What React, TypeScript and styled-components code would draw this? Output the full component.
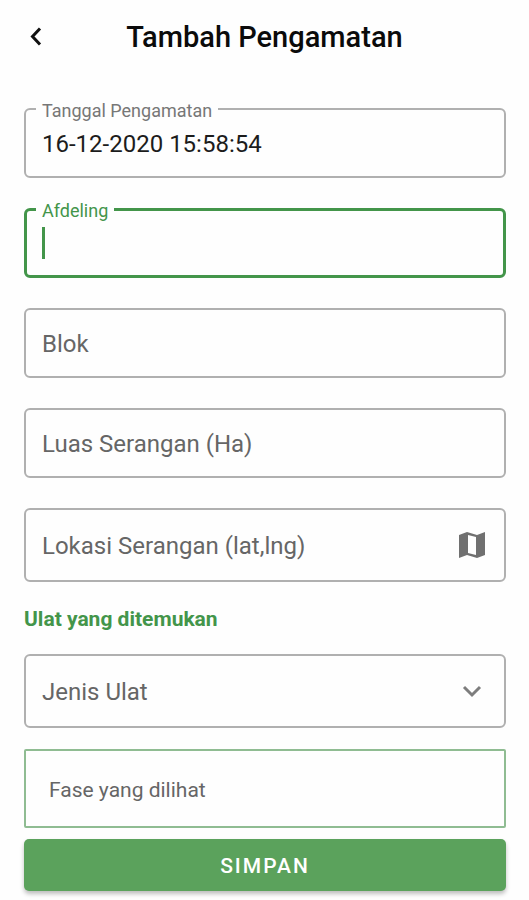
import React from "react";
import styled, { createGlobalStyle, css } from "styled-components";

const green = "#43954a";

const GlobalStyle = createGlobalStyle`
  *, *::before, *::after { box-sizing: border-box; }
  body {
    margin: 0;
    background: #fefefe;
    font-family: Roboto, "Liberation Sans", sans-serif;
  }
`;

const Page = styled.div`
  display: flex;
  flex-direction: column;
`;

const AppBar = styled.header`
  display: grid;
  grid-template-columns: 48px 1fr 48px;
  align-items: center;
  height: 74px;
  padding: 0 12px;
`;

const BackButton = styled.button`
  display: grid;
  place-items: center;
  width: 48px;
  height: 48px;
  padding: 0;
  border: 0;
  background: none;
  color: #111;
`;

const Title = styled.h1`
  margin: 0;
  color: #0b0b0b;
  font-size: 29px;
  font-weight: 500;
  line-height: 36px;
  text-align: center;
`;

const Form = styled.form`
  display: flex;
  flex-direction: column;
  padding: 34px 23px 8px 24px;
`;

const FieldList = styled.div`
  display: flex;
  flex-direction: column;
  gap: 30px;
`;

const Field = styled.div<{ $active?: boolean; $tall?: boolean }>`
  position: relative;
  display: flex;
  align-items: center;
  height: ${({ $tall }) => ($tall ? 74 : 70)}px;
  padding: 0 16px;
  border: 2px solid #b0b0b0;
  border-radius: 6px;
  ${({ $active }) =>
    $active &&
    css`
      border-width: 3px;
      border-color: ${green};
      padding: 0 15px;
    `}
`;

const FloatingLabel = styled.label<{ $active?: boolean }>`
  position: absolute;
  top: ${({ $active }) => ($active ? -13 : -12)}px;
  left: ${({ $active }) => ($active ? 9 : 10)}px;
  padding: 0 6px;
  background: #fefefe;
  color: ${({ $active }) => ($active ? green : "#777")};
  font-size: 18px;
  line-height: 26px;
`;

const controlText = css`
  flex: 1;
  min-width: 0;
  height: 100%;
  padding: 2px 0 0;
  border: 0;
  outline: 0;
  background: none;
  font-family: inherit;
  font-size: 24px;
`;

const TextInput = styled.input`
  ${controlText}
  color: #1c1c1c;
  &::placeholder {
    color: #666;
    opacity: 1;
  }
`;

const FocusedInput = styled(TextInput)`
  caret-color: transparent;
`;

const Caret = styled.span`
  width: 3px;
  height: 32px;
  background: ${green};
`;

const Select = styled.select`
  ${controlText}
  appearance: none;
  color: #666;
`;

const IconButton = styled.button`
  display: grid;
  place-items: center;
  width: 32px;
  height: 32px;
  padding: 0;
  border: 0;
  background: none;
  color: #707070;
`;

const SelectIcon = styled.span`
  display: grid;
  place-items: center;
  width: 32px;
  color: #7d7d7d;
  pointer-events: none;
`;

const SectionTitle = styled.h2`
  margin: 22px 0 20px;
  color: ${green};
  font-size: 21px;
  font-weight: 700;
  line-height: 30px;
`;

const PhaseBox = styled.div`
  display: flex;
  height: 79px;
  margin-top: 21px;
  padding: 0 23px;
  border: 2px solid #8fbc92;
  border-radius: 2px;
`;

const PhaseInput = styled(TextInput)`
  font-size: 21px;
`;

const SubmitButton = styled.button`
  height: 52px;
  margin-top: 11px;
  padding: 2px 0 0;
  border: 0;
  border-radius: 5px;
  background: #5ba25c;
  box-shadow: 0 3px 4px rgba(0, 0, 0, 0.25);
  color: #fff;
  font-family: inherit;
  font-size: 21px;
  font-weight: 500;
  letter-spacing: 2px;
`;

export default function App() {
  return (
    <Page>
      <GlobalStyle />
      <AppBar>
        <BackButton type="button" aria-label="Kembali">
          <svg width="14" height="20" viewBox="0 0 14 20" fill="none" stroke="currentColor" strokeWidth="3">
            <path d="M11 1.5 3.5 9.5l7.5 8" />
          </svg>
        </BackButton>
        <Title>Tambah Pengamatan</Title>
      </AppBar>
      <Form onSubmit={(e) => e.preventDefault()}>
        <FieldList>
          <Field>
            <FloatingLabel htmlFor="tanggal">Tanggal Pengamatan</FloatingLabel>
            <TextInput id="tanggal" defaultValue="16-12-2020 15:58:54" />
          </Field>
          <Field $active>
            <FloatingLabel htmlFor="afdeling" $active>
              Afdeling
            </FloatingLabel>
            <Caret />
            <FocusedInput id="afdeling" autoFocus />
          </Field>
          <Field>
            <TextInput aria-label="Blok" placeholder="Blok" />
          </Field>
          <Field>
            <TextInput aria-label="Luas Serangan (Ha)" placeholder="Luas Serangan (Ha)" />
          </Field>
          <Field $tall>
            <TextInput aria-label="Lokasi Serangan (lat,lng)" placeholder="Lokasi Serangan (lat,lng)" />
            <IconButton type="button" aria-label="Pilih di peta">
              <svg width="28" height="28" viewBox="0 0 28 28">
                <path
                  fill="currentColor"
                  fillRule="evenodd"
                  d="M1 4 9 1l10 3 8-3v23l-8 3-10-3-8 3ZM10 4v18l8 2V6Z"
                />
              </svg>
            </IconButton>
          </Field>
        </FieldList>
        <SectionTitle>Ulat yang ditemukan</SectionTitle>
        <Field $tall>
          <Select aria-label="Jenis Ulat" defaultValue="">
            <option value="">Jenis Ulat</option>
          </Select>
          <SelectIcon>
            <svg width="20" height="14" viewBox="0 0 20 14" fill="none" stroke="currentColor" strokeWidth="3">
              <path d="m2 3 8 8 8-8" />
            </svg>
          </SelectIcon>
        </Field>
        <PhaseBox>
          <PhaseInput aria-label="Fase yang dilihat" placeholder="Fase yang dilihat" />
        </PhaseBox>
        <SubmitButton type="submit">SIMPAN</SubmitButton>
      </Form>
    </Page>
  );
}
